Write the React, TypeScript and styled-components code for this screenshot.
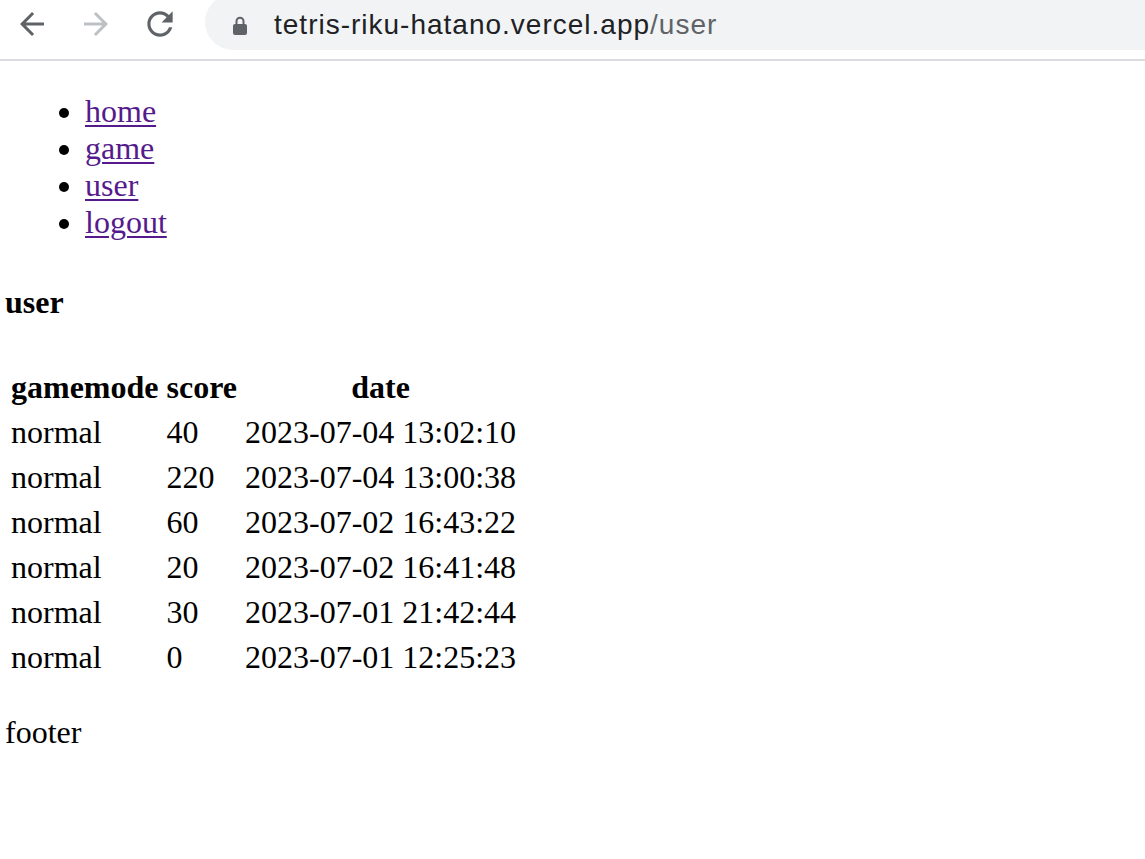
import React from "react";
import styled, { createGlobalStyle } from "styled-components";

const GlobalStyle = createGlobalStyle`
  html, body {
    margin: 0;
    padding: 0;
    background: #ffffff;
  }
  body {
    font-family: "Liberation Serif", "Times New Roman", serif;
    font-size: 32px;
    line-height: 37px;
    color: #000000;
  }
`;

const ChromeBar = styled.header`
  display: flex;
  align-items: center;
  height: 59px;
  border-bottom: 2px solid #dadce0;
  overflow: hidden;
  background: #ffffff;
`;

const IconButton = styled.div<{ $color: string }>`
  width: 64px;
  height: 47px;
  flex: 0 0 64px;
  display: flex;
  align-items: center;
  justify-content: center;
  color: ${(p) => p.$color};
  align-self: flex-start;
`;

const Omnibox = styled.div`
  flex: 1;
  align-self: flex-start;
  margin-top: -6px;
  margin-left: 13px;
  margin-right: -40px;
  height: 56px;
  border-radius: 28px;
  background: #f1f3f4;
  display: flex;
  align-items: center;
  padding: 6px 0 0 28px;
  box-sizing: border-box;
`;

const Url = styled.span`
  font-family: "Liberation Sans", Arial, sans-serif;
  font-size: 28px;
  line-height: 30px;
  margin-left: 27px;
  color: #202124;
  letter-spacing: 1px;
`;

const UrlPath = styled.span`
  color: #5f6368;
`;

const Page = styled.main`
  padding: 0 5px;
`;

const NavList = styled.ul`
  margin: 32px 0;
  padding-left: 80px;
  list-style: disc;
`;

const NavLink = styled.a`
  color: #551a8b;
  text-decoration: underline;
  text-decoration-thickness: 2px;
  text-underline-offset: 3px;
`;

const Heading = styled.h4`
  font-size: 32px;
  font-weight: bold;
  margin: 42.6px 0;
`;

const ScoreTable = styled.table`
  border-spacing: 4px;
  border-collapse: separate;
  font-size: 32px;
`;

const HeadCell = styled.th`
  padding: 2px;
  font-weight: bold;
  text-align: center;
`;

const Cell = styled.td`
  padding: 2px;
  text-align: left;
`;

const Footer = styled.footer`
  margin: 32px 0;
`;

const BackIcon = () => (
  <svg width="36" height="36" viewBox="0 0 24 24" fill="currentColor">
    <path d="M20 11H7.83l5.59-5.59L12 4l-8 8 8 8 1.41-1.41L7.83 13H20v-2z" />
  </svg>
);

const ForwardIcon = () => (
  <svg width="36" height="36" viewBox="0 0 24 24" fill="currentColor">
    <path d="M4 11h12.17l-5.59-5.59L12 4l8 8-8 8-1.41-1.41L16.17 13H4v-2z" />
  </svg>
);

const ReloadIcon = () => (
  <svg width="38" height="38" viewBox="0 0 24 24" fill="currentColor">
    <path d="M17.65 6.35C16.2 4.9 14.21 4 12 4c-4.42 0-7.99 3.58-7.99 8s3.57 8 7.99 8c3.73 0 6.84-2.55 7.73-6h-2.08c-.82 2.33-3.04 4-5.65 4-3.31 0-6-2.69-6-6s2.69-6 6-6c1.66 0 3.14.69 4.22 1.78L13 11h7V4l-2.35 2.35z" />
  </svg>
);

const LockIcon = () => (
  <svg width="14" height="20" viewBox="0 0 14 20" fill="#5f6368">
    <path
      d="M3.5 9V6.2a3.5 3.5 0 0 1 7 0V9"
      fill="none"
      stroke="#5f6368"
      strokeWidth="2"
    />
    <rect x="0" y="9" width="14" height="11" rx="2" />
  </svg>
);

const links = ["home", "game", "user", "logout"];

const rows: [string, number, string][] = [
  ["normal", 40, "2023-07-04 13:02:10"],
  ["normal", 220, "2023-07-04 13:00:38"],
  ["normal", 60, "2023-07-02 16:43:22"],
  ["normal", 20, "2023-07-02 16:41:48"],
  ["normal", 30, "2023-07-01 21:42:44"],
  ["normal", 0, "2023-07-01 12:25:23"],
];

export default function App() {
  return (
    <>
      <GlobalStyle />
      <ChromeBar>
        <IconButton $color="#5f6368">
          <BackIcon />
        </IconButton>
        <IconButton $color="#bdc1c6">
          <ForwardIcon />
        </IconButton>
        <IconButton $color="#5f6368">
          <ReloadIcon />
        </IconButton>
        <Omnibox>
          <LockIcon />
          <Url>
            tetris-riku-hatano.vercel.app<UrlPath>/user</UrlPath>
          </Url>
        </Omnibox>
      </ChromeBar>
      <Page>
        <nav>
          <NavList>
            {links.map((l) => (
              <li key={l}>
                <NavLink href={`#${l}`}>{l}</NavLink>
              </li>
            ))}
          </NavList>
        </nav>
        <Heading>user</Heading>
        <ScoreTable>
          <thead>
            <tr>
              <HeadCell>gamemode</HeadCell>
              <HeadCell>score</HeadCell>
              <HeadCell>date</HeadCell>
            </tr>
          </thead>
          <tbody>
            {rows.map((r, i) => (
              <tr key={i}>
                <Cell>{r[0]}</Cell>
                <Cell>{r[1]}</Cell>
                <Cell>{r[2]}</Cell>
              </tr>
            ))}
          </tbody>
        </ScoreTable>
        <Footer>footer</Footer>
      </Page>
    </>
  );
}
